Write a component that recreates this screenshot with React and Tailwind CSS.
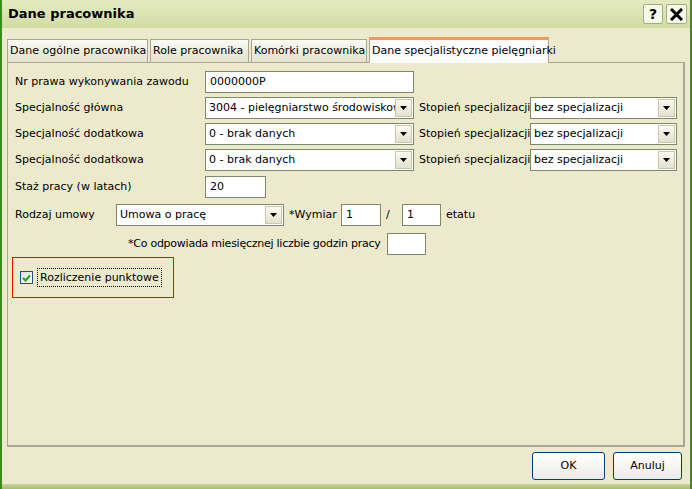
import React from 'react';

const font = { fontFamily: 'Tahoma, "DejaVu Sans", sans-serif' };

function Arrow() {
  return (
    <div className="w-[17px] h-[18px] mr-[1px] shrink-0 bg-gradient-to-b from-[#fbfaf3] to-[#e4e1cc] border border-[#c9c6ad] flex items-center justify-center">
      <svg width="7" height="4" viewBox="0 0 7 4"><path d="M0 0h7L3.5 4z" fill="#000" /></svg>
    </div>
  );
}

function Select({ value, w }) {
  return (
    <div className={`h-[22px] ${w} shrink-0 bg-white border border-[#7b8a68] flex items-center justify-between pl-[3px] overflow-hidden`}>
      <span className="whitespace-nowrap overflow-hidden">{value}</span>
      <Arrow />
    </div>
  );
}

function Input({ value, w }) {
  return (
    <div className={`h-[22px] ${w} shrink-0 bg-white border border-[#7b8a68] flex items-center pl-[4px]`}>{value}</div>
  );
}

function Row({ label, children, className = '' }) {
  return (
    <div className={`flex items-center whitespace-nowrap ${className}`}>
      <div className="w-[190px] shrink-0">{label}</div>
      {children}
    </div>
  );
}

export default function App() {
  const tabs = [
    ['Dane ogólne pracownika', 'w-[141px]'],
    ['Role pracownika', 'w-[99px]'],
    ['Komórki pracownika', 'w-[116px]'],
  ];
  return (
    <div className="w-[692px] h-[489px] bg-[#ece9cc] text-[11px] text-black flex flex-col border-l-2 border-r-2 border-[#3f8a1f]" style={font}>
      <div className="h-[28px] shrink-0 bg-gradient-to-b from-[#e4ebc2] to-[#d2dca2] flex items-center justify-between pl-[6px] pr-[3px]">
        <span className="font-bold text-[13px]">Dane pracownika</span>
        <div className="flex gap-[3px]">
          <div className="w-[20px] h-[20px] border border-[#9fb07a] rounded-[2px] bg-[#f7f8ec] flex items-center justify-center font-bold text-[14px]">?</div>
          <div className="w-[21px] h-[20px] border border-[#9fb07a] rounded-[2px] bg-[#f7f8ec] flex items-center justify-center">
            <svg width="13" height="13" viewBox="0 0 13 13"><path d="M1 1L12 12M12 1L1 12" stroke="#000" strokeWidth="3" /></svg>
          </div>
        </div>
      </div>
      <div className="flex-1 flex flex-col px-[5px] pt-[8px]">
        <div className="flex items-end gap-[2px] h-[26px]">
          {tabs.map(([t, w]) => (
            <div key={t} className={`h-[23px] ${w} px-[2px] flex items-center border border-b-0 border-[#a9a793] bg-gradient-to-b from-[#fbfbf6] to-[#e3e0cb] whitespace-nowrap overflow-hidden`}>{t}</div>
          ))}
          <div className="h-[26px] w-[180px] -mb-[1px] relative z-10 px-[2px] flex items-center bg-[#fcfcfe] border border-b-0 border-[#a9a793] border-t-[3px] border-t-[#f29a5a] whitespace-nowrap">Dane specjalistyczne pielęgniarki</div>
        </div>
        <div className="h-[385px] border border-[#a9a793] border-r-[2px] border-b-[2px] flex flex-col pl-[7px] pt-[8px]">
          <Row label="Nr prawa wykonywania zawodu">
            <Input value="0000000P" w="w-[209px]" />
          </Row>
          <Row label="Specjalność główna" className="mt-[4px]">
            <Select value="3004 - pielęgniarstwo środowiskowe" w="w-[209px]" />
            <span className="ml-[5px] w-[111px]">Stopień specjalizacji</span>
            <Select value="bez specjalizacji" w="w-[147px]" />
          </Row>
          <Row label="Specjalność dodatkowa" className="mt-[4px]">
            <Select value="0 - brak danych" w="w-[209px]" />
            <span className="ml-[5px] w-[111px]">Stopień specjalizacji</span>
            <Select value="bez specjalizacji" w="w-[147px]" />
          </Row>
          <Row label="Specjalność dodatkowa" className="mt-[4px]">
            <Select value="0 - brak danych" w="w-[209px]" />
            <span className="ml-[5px] w-[111px]">Stopień specjalizacji</span>
            <Select value="bez specjalizacji" w="w-[147px]" />
          </Row>
          <Row label="Staż pracy (w latach)" className="mt-[5px]">
            <Input value="20" w="w-[61px]" />
          </Row>
          <div className="flex items-center mt-[6px] whitespace-nowrap">
            <span className="w-[101px] shrink-0">Rodzaj umowy</span>
            <Select value="Umowa o pracę" w="w-[168px]" />
            <span className="ml-[5px] w-[52px] shrink-0">*Wymiar</span>
            <Input value="1" w="w-[40px]" />
            <span className="ml-[5px] w-[16px] shrink-0">/</span>
            <Input value="1" w="w-[39px]" />
            <span className="ml-[5px]">etatu</span>
          </div>
          <div className="flex items-center mt-[7px] pl-[113px] whitespace-nowrap">
            <span className="w-[259px] shrink-0 tracking-[-0.25px]">*Co odpowiada miesięcznej liczbie godzin pracy</span>
            <Input value="" w="w-[39px]" />
          </div>
          <div className="-ml-[3px] mt-[2px] w-[162px] h-[41px] shadow-[inset_0_0_0_1px_#ff0000] flex items-center pl-[8px] whitespace-nowrap">
            <div className="w-[13px] h-[13px] shrink-0 border border-[#1c5180] bg-gradient-to-br from-[#dcdcd5] to-white flex items-center justify-center">
              <svg width="9" height="8" viewBox="0 0 9 8"><path d="M1 4l2.5 2.5L8 1.5" stroke="#21a121" strokeWidth="2" fill="none" /></svg>
            </div>
            <span className="ml-[4px] px-[2px] border border-dotted border-black leading-[17px]">Rozliczenie punktowe</span>
          </div>
        </div>
        <div className="flex justify-end gap-[8px] mt-[5px] pr-[3px]">
          <div className="w-[73px] h-[28px] border border-[#003c74] rounded-[3px] bg-gradient-to-b from-white to-[#ecebe6] flex items-center justify-center">OK</div>
          <div className="w-[69px] h-[28px] border border-[#003c74] rounded-[3px] bg-gradient-to-b from-white to-[#ecebe6] flex items-center justify-center">Anuluj</div>
        </div>
      </div>
      <div className="h-[5px] shrink-0 bg-gradient-to-b from-[#c9d69a] to-[#a9bd6c]" />
    </div>
  );
}
